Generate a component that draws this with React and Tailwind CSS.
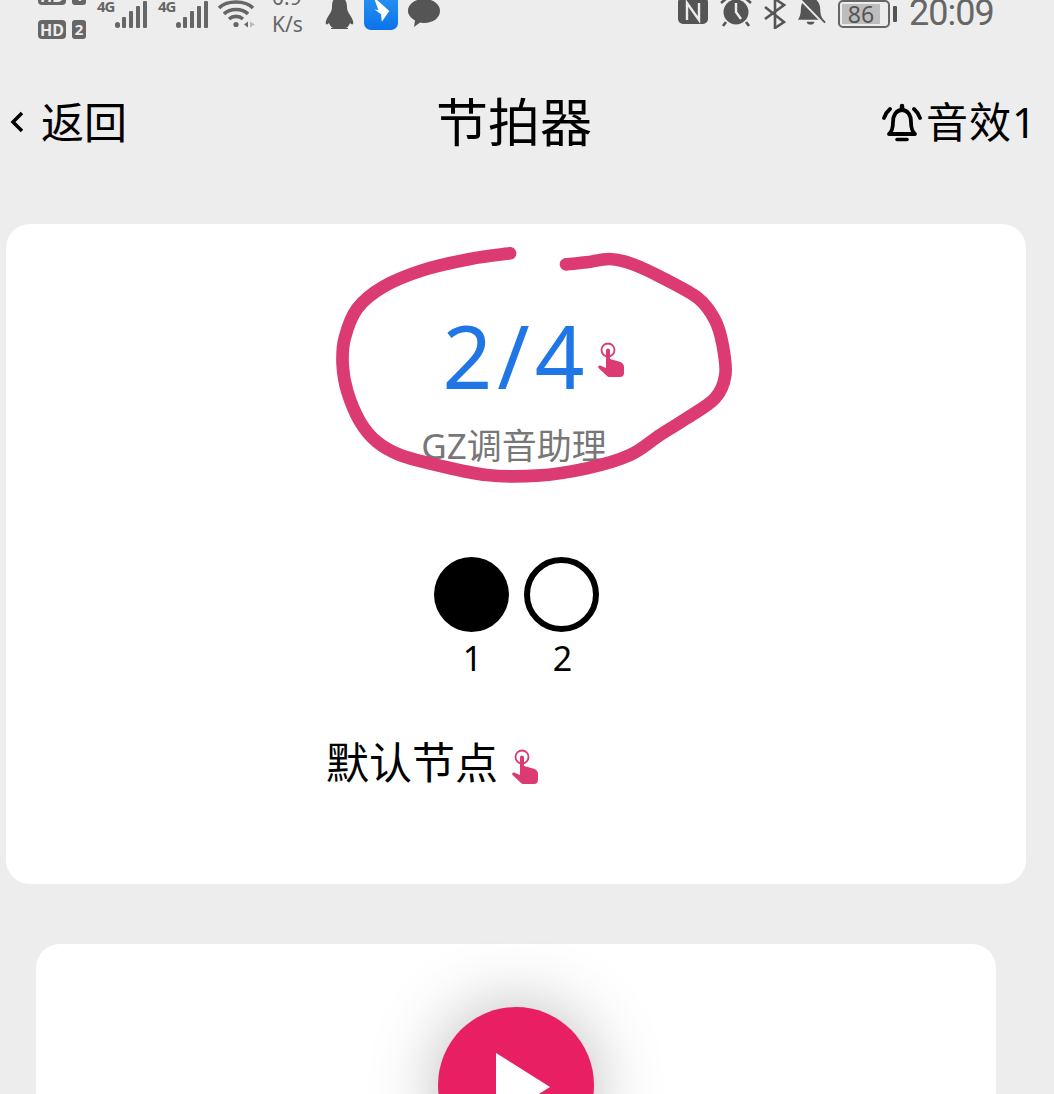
import React from "react";

const FONT = "font-['Noto_Sans','Noto_Sans_CJK_SC',sans-serif]";

// hand drawn ring around the metre, points read off the picture
const ringPoints = [
  [570, 55], [450, 72], [310, 105], [190, 155], [112, 220], [74, 310], [68, 390], [82, 470], [120, 560],
  [170, 620], [240, 660], [350, 690], [500, 720], [650, 722], [800, 700], [930, 660],
  [1020, 600], [1100, 550], [1185, 490], [1216, 420], [1208, 330], [1185, 255], [1135, 190], [1030, 130],
  [940, 88], [870, 72], [800, 82], [738, 88],
];

function smoothPath(pts) {
  let d = `M${pts[0][0]} ${pts[0][1]}`;
  for (let i = 0; i < pts.length - 1; i++) {
    const p0 = pts[i - 1] || pts[i];
    const p1 = pts[i];
    const p2 = pts[i + 1];
    const p3 = pts[i + 2] || p2;
    const c1x = p1[0] + (p2[0] - p0[0]) / 6;
    const c1y = p1[1] + (p2[1] - p0[1]) / 6;
    const c2x = p2[0] - (p3[0] - p1[0]) / 6;
    const c2y = p2[1] - (p3[1] - p1[1]) / 6;
    d += ` C${c1x} ${c1y} ${c2x} ${c2y} ${p2[0]} ${p2[1]}`;
  }
  return d;
}

function HandIcon({ className }) {
  return (
    <svg viewBox="0 0 28 36" className={className}>
      <circle cx="11" cy="8" r="6.5" fill="none" stroke="#dc3a72" strokeWidth="1.8" />
      <path
        d="M9 8.5a2 2 0 0 1 4 0V17l9 2.5c3 .8 5 2.5 5 5.5v6c0 2.5-1.5 4-4 4H13c-1.5 0-2.5-.6-3.5-1.6L1.5 26c-1-1.2.6-3 2.2-2.2L9 26Z"
        fill="#dc3a72"
      />
    </svg>
  );
}

function Bars({ className }) {
  return (
    <svg viewBox="0 0 32 27" className={className} fill="#666">
      <rect x="0" y="21" width="5" height="6" rx="2.5" />
      <rect x="7" y="16" width="4" height="11" rx="1" />
      <rect x="14" y="10" width="4" height="17" rx="1" />
      <rect x="21" y="5" width="4" height="22" rx="1" />
      <rect x="28" y="0" width="4" height="27" rx="1" />
    </svg>
  );
}

function StatusBar() {
  return (
    <div className="flex h-[40px] items-end text-[#666]">
      <div className="ml-[38px] flex flex-col gap-[15px] pb-px">
        {["1", "2"].map((n) => (
          <div key={n} className="flex gap-[6px]">
            <span className="flex h-[19px] w-[28px] items-center justify-center rounded-[4px] bg-[#666] text-[16px] font-bold leading-none text-[#ededed]">
              HD
            </span>
            <span className="flex h-[19px] w-[14px] items-center justify-center rounded-[3px] bg-[#666] text-[15px] font-bold leading-none text-[#ededed]">
              {n}
            </span>
          </div>
        ))}
      </div>
      <div className="mb-[12px] ml-[11px] flex items-end">
        <span className="mb-[16px] w-[18px] text-[15px] font-bold leading-[12px] tracking-[-1px]">4G</span>
        <Bars className="h-[27px] w-[32px]" />
      </div>
      <div className="mb-[12px] ml-[11px] flex items-end">
        <span className="mb-[16px] w-[18px] text-[15px] font-bold leading-[12px] tracking-[-1px]">4G</span>
        <Bars className="h-[27px] w-[32px]" />
      </div>
      <svg viewBox="0 0 37 30" className="mb-[12px] ml-[10px] h-[30px] w-[37px]" fill="none" stroke="#666" strokeWidth="3.6">
        <path d="M1 10C9 2 27 2 35 10" />
        <path d="M6 16c6-6 18-6 24 0" />
        <path d="M11 21c4-3.5 10-3.5 14 0" />
        <circle cx="18" cy="26.5" r="2.6" fill="#666" stroke="none" />
        <path d="M26 26.5l4-3v6Z" fill="#666" stroke="none" />
        <path d="M32 23.5l5 3-5 3Z" fill="#bbb" stroke="none" />
      </svg>
      <div className="mb-[2px] ml-[17px] flex w-[36px] flex-col text-[21px] leading-[27px]">
        <span>0.9</span>
        <span>K/s</span>
      </div>
      <svg viewBox="0 0 30 32" className="mb-[11px] ml-[16px] h-[32px] w-[30px]" fill="#555">
        <path d="M15 0c6 0 8 5 8 10 0 3 1 5 3 8 2 3 4 7 3 9-1 1-2 0-3-1-1 3-3 5-5 5h3v1H7v-1h3c-2 0-4-2-5-5-1 1-2 2-3 1-1-2 1-6 3-9 2-3 3-5 3-8C8 5 9 0 15 0Z" />
      </svg>
      <div className="mb-[10px] ml-[10px] flex h-[44px] w-[34px] items-center justify-center rounded-[7px] bg-gradient-to-b from-[#2f9bf5] to-[#0b72ea]">
        <svg viewBox="0 0 24 34" className="mt-[6px] h-[30px] w-[20px]" fill="#fff">
          <path d="M3 0l19 17-9 13-1-9-8-6 5 1Z" />
        </svg>
      </div>
      <svg viewBox="0 0 32 30" className="mb-[12px] ml-[10px] h-[30px] w-[32px]" fill="#555">
        <path d="M16 1c9 0 16 5 16 12s-7 12-16 12c-2 0-3 0-4-.4L6 29l1-6.500C3 20 0 17 0 13 0 6 7 1 16 1Z" />
      </svg>

      <svg viewBox="0 0 30 30" className="mb-[13px] ml-[238px] h-[30px] w-[30px]" fill="none">
        <path d="M6 0h6l6 11v16H6c-3 0-6-2-6-5V5c0-3 3-5 6-5Z" fill="#555" />
        <path d="M12 0h12c3 0 6 2 6 5v17c0 3-3 5-6 5h-6L12 16Z" fill="#555" />
        <path d="M9 23V6l12 17V6" stroke="#ededed" strokeWidth="2.400" />
      </svg>
      <svg viewBox="0 0 32 30" className="mb-[13px] ml-[12px] h-[30px] w-[32px]" fill="none">
        <circle cx="16" cy="15" r="12.500" fill="#555" />
        <path d="M16 6v9l5 7" stroke="#ededed" strokeWidth="2.400" />
        <path d="M1 6l6-5M31 6l-6-5M6 25l-3 4M26 25l3 4" stroke="#555" strokeWidth="2.600" />
      </svg>
      <svg viewBox="0 0 22 30" className="mb-[11px] ml-[12px] h-[30px] w-[22px]" fill="none" stroke="#555" strokeWidth="2.600">
        <path d="M1 20L20 6 11 0v29l9-6L1 8" />
      </svg>
      <svg viewBox="0 0 30 30" className="mb-[13px] ml-[11px] h-[30px] w-[29px]" fill="#555">
        <path d="M14 0c6 0 10 6 10 12 0 5 1 8 3 11H1c2-3 3-6 3-11C4 6 8 0 14 0Z" />
        <path d="M10 25h8c0 2-2 3-4 3s-4-1-4-3Z" />
        <path d="M2 0l27 28" stroke="#ededed" strokeWidth="3" />
        <path d="M4 0l25 26" stroke="#555" strokeWidth="2" />
      </svg>
      <div className="mb-[12px] ml-[12px] flex items-center">
        <div className="flex h-[28px] w-[52px] items-center rounded-[5px] border-2 border-[#666] p-[2px]">
          <span className="flex h-full w-[38px] items-center justify-center bg-[#bdbdbd] text-[23px] leading-none text-[#555]">
            86
          </span>
        </div>
        <span className="ml-[3px] h-[16px] w-[4px] rounded-[1px] bg-[#555]" />
      </div>
      <span className="mb-[9px] ml-[12px] font-['Roboto',sans-serif] text-[36px] leading-[36px] tracking-[-1px] text-[#666]">20:09</span>
    </div>
  );
}

function BellIcon() {
  return (
    <svg viewBox="0 0 40 40" className="h-[40px] w-[40px]" fill="none" stroke="#000" strokeWidth="3.800">
      <path d="M7 32c3-2.500 4-6 4-12 0-7 3.500-12 9-12s9 5 9 12c0 6 1 9.500 4 12Z" strokeLinejoin="round" />
      <path d="M20 7V4" strokeWidth="4.500" strokeLinecap="round" />
      <path d="M15 37.500h10" strokeWidth="3.500" strokeLinecap="round" />
      <path d="M8 7C5 9.500 3 13 2 16M32 7c3 2.500 5 6 6 9" strokeLinecap="round" />
    </svg>
  );
}

function App() {
  return (
    <div className={`h-[1094px] w-[1054px] overflow-hidden bg-[#ededed] ${FONT}`}>
      <StatusBar />

      <div className="mt-[54px] flex h-[56px] items-center text-black">
        <svg viewBox="0 0 14 22" className="ml-[10px] h-[22px] w-[14px]" fill="none" stroke="#000" strokeWidth="3.500">
          <path d="M12 2L3 11l9 9" />
        </svg>
        <span className="ml-[17px] text-[43px] leading-none">返回</span>
        <span className="ml-[309px] text-[52px] leading-none">节拍器</span>
        <div className="ml-auto mr-[17px] flex items-center">
          <BellIcon />
          <span className="ml-[4px] text-[42px] leading-none tracking-[1px]">音效1</span>
        </div>
      </div>

      <div className="relative ml-[6px] mt-[74px] h-[660px] w-[1020px] rounded-[24px] bg-white">
        <div className="flex justify-center pt-[81px]">
          <div className="relative text-[87px] leading-[100px] tracking-[5px] text-[#2176e6]">
            2/4
            <HandIcon className="absolute left-[154px] top-[37px] h-[36px] w-[28px]" />
          </div>
        </div>
        <p className="mt-[19px] pr-[4px] text-center text-[35px] leading-[44px] text-[#777]">GZ调音助理</p>

        {/* annotation drawn on top of the screenshot */}
        <svg
          viewBox="0 0 1290 780"
          className="pointer-events-none absolute left-[314px] top-[11px] h-[260px] w-[430px]"
          fill="none"
          stroke="#dc3a72"
          strokeWidth="38"
          strokeLinecap="round"
          strokeLinejoin="round"
        >
          <path d={smoothPath(ringPoints)} />
        </svg>

        <div className="mt-[89px] flex justify-center gap-[15px]">
          <div className="flex w-[75px] flex-col items-center">
            <div className="h-[75px] w-[75px] rounded-full bg-black" />
            <span className="ml-[3px] mt-[6px] text-[34px] leading-[40px] text-black">1</span>
          </div>
          <div className="flex w-[75px] flex-col items-center">
            <div className="h-[75px] w-[75px] rounded-full border-[6px] border-black bg-white" />
            <span className="ml-[3px] mt-[6px] text-[34px] leading-[40px] text-black">2</span>
          </div>
        </div>

        <div className="ml-[320px] mt-[57px] flex items-center">
          <span className="text-[43px] leading-[56px] text-black">默认节点</span>
          <HandIcon className="ml-[13px] mt-[8px] h-[36px] w-[28px]" />
        </div>
      </div>

      <div className="ml-[36px] mt-[60px] flex h-[300px] w-[960px] justify-center rounded-[24px] bg-white pt-[63px]">
        <div className="flex h-[156px] w-[156px] items-center justify-center rounded-full bg-[#e91f63] shadow-[0_0_70px_rgba(0,0,0,0.28)]">
          <svg viewBox="0 0 54 68" className="ml-[14px] mt-[4px] h-[68px] w-[54px]" fill="#fff">
            <path d="M0 0l54 34L0 68Z" />
          </svg>
        </div>
      </div>
    </div>
  );
}

export default App;
